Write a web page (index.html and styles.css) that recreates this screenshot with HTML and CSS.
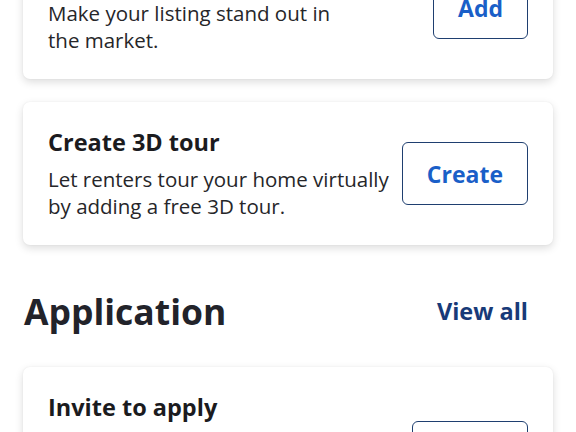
FILE: index.html
```html
<!DOCTYPE html>
<html lang="en">
<head>
<meta charset="utf-8">
<title>Listing tools</title>
<link rel="stylesheet" href="styles.css">
</head>
<body>
<main class="page">
  <section class="card card--first">
    <div class="card-text">
      <h3 class="card-title">Add photos</h3>
      <p class="card-body">Make your listing stand out in<br>the market.</p>
    </div>
    <button class="btn">Add</button>
  </section>

  <section class="card">
    <div class="card-text">
      <h3 class="card-title">Create 3D tour</h3>
      <p class="card-body">Let renters tour your home virtually by adding a free 3D tour.</p>
    </div>
    <button class="btn">Create</button>
  </section>

  <header class="section-head">
    <h2 class="section-title">Application</h2>
    <a class="view-all" href="#">View all</a>
  </header>

  <section class="card">
    <div class="card-text">
      <h3 class="card-title">Invite to apply</h3>
      <p class="card-body">Send renters a link so they can fill out an application and submit it for your property.</p>
    </div>
    <button class="btn">Invite</button>
  </section>
</main>
</body>
</html>
```

FILE: styles.css
```css
html, body {
  margin: 0;
  padding: 0;
  background: #ffffff;
}

body {
  font-family: "Open Sans", "Noto Sans", sans-serif;
  color: #1d1d20;
  overflow: hidden;
  height: 432px;
}

.page {
  padding: 0 23px;
  display: flex;
  flex-direction: column;
}

.card {
  background: #ffffff;
  border-radius: 7px;
  box-shadow: 0 3px 9px rgba(0, 0, 0, 0.14), 0 0 2px rgba(0, 0, 0, 0.06);
  padding: 25px;
  display: flex;
  align-items: center;
  gap: 8px;
  margin-bottom: 23px;
}

.card--first {
  margin-top: -64px;
}

.card-text {
  flex: 1;
  min-width: 0;
}

.card-title {
  margin: 0 0 8px;
  font-size: 23.5px;
  line-height: 31px;
  font-weight: 700;
  color: #1b1b1e;
}

.card-body {
  margin: 0;
  font-size: 20.5px;
  line-height: 27px;
  font-weight: 400;
  color: #262629;
}

.btn {
  flex: none;
  height: 63px;
  padding: 0 24px;
  background: #ffffff;
  border: 1.5px solid #1f3f70;
  border-radius: 6px;
  font-family: "Open Sans", "Noto Sans", sans-serif;
  font-size: 23px;
  font-weight: 700;
  color: #1a5fc8;
}

.section-head {
  display: flex;
  align-items: center;
  justify-content: space-between;
  padding-right: 25px;
  margin: 19px 0 32px 1px;
}

.section-title {
  margin: 0;
  font-size: 35.5px;
  line-height: 48px;
  font-weight: 700;
  color: #22232a;
}

.view-all {
  font-size: 23.5px;
  font-weight: 700;
  color: #183a78;
  text-decoration: none;
}
```
